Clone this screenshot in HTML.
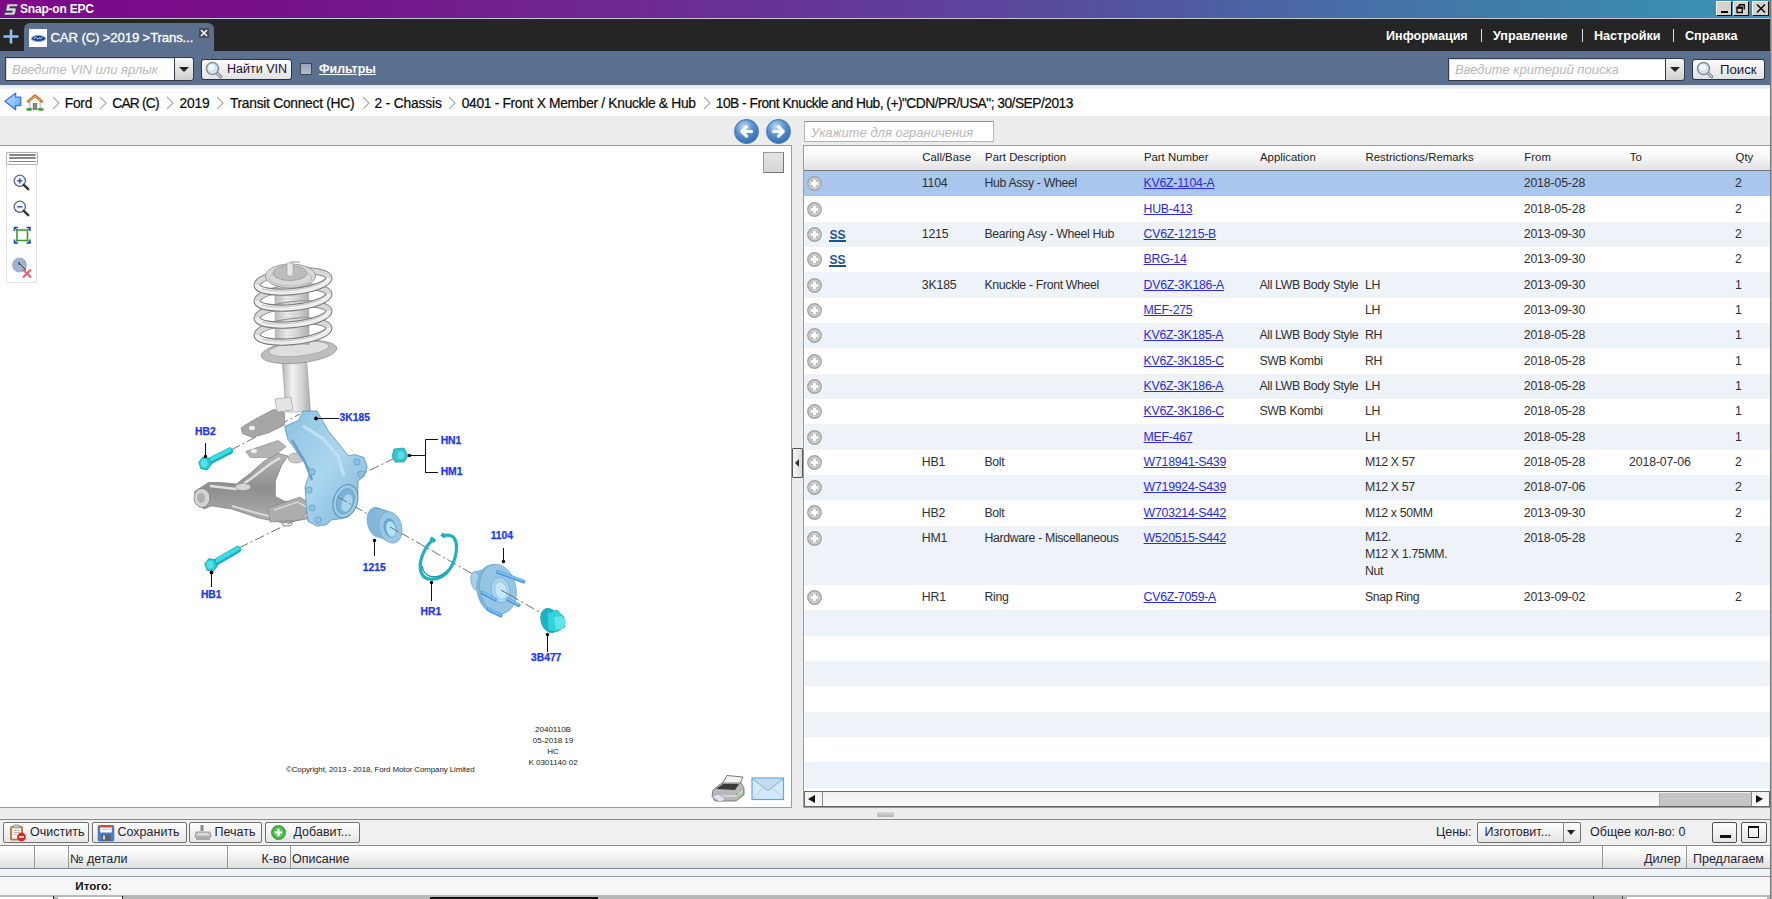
<!DOCTYPE html>
<html><head><meta charset="utf-8">
<style>
*{box-sizing:border-box;margin:0;padding:0}
html,body{width:1772px;height:899px;overflow:hidden;background:#ececec;font-family:"Liberation Sans",sans-serif;color:#222}
.a{position:absolute;white-space:nowrap}
#title{left:0;top:0;width:1772px;height:18px;background:linear-gradient(90deg,#7c0888 0%,#780e88 12%,#6e2890 35%,#623c98 50%,#5450a0 62%,#4c62a4 70%,#407ca8 84%,#3894b6 100%)}
#tline{left:0;top:18px;width:1772px;height:1px;background:#c8c8d0}
#dark{left:0;top:19px;width:1772px;height:33px;background:#252525}
#tab{left:24px;top:23px;width:190px;height:29px;background:#5b6f8f;border-radius:6px 6px 0 0}
#tool{left:0;top:51px;width:1772px;height:35px;background:#5b6f8f}
#bline{left:0;top:85px;width:1772px;height:4px;background:linear-gradient(#e2e5e8,#f4f5f6)}
#bread{left:0;top:89px;width:1772px;height:26.5px;background:#fff}
.inp{background:#fff;border:1.2px solid #343c4a;box-shadow:inset 1px 1px 0 #d8d8d8}
.ph{font:italic 13px "Liberation Sans",sans-serif;color:#b8b8b8}
.btn{background:linear-gradient(#fbfbfb,#e2e2e2);border:1.3px solid #2c323e;border-radius:3px}
.ddb{background:linear-gradient(#f6f6f6,#cfcfcf);border:1.2px solid #343c4a;border-radius:0 3px 3px 0}
.tri{width:0;height:0;border-left:5px solid transparent;border-right:5px solid transparent;border-top:5px solid #222}
.nav{font:bold 12.6px "Liberation Sans",sans-serif;color:#fff;top:28.5px}
.sep{top:29px;width:1px;height:13px;background:#ddd}
.bc{font:13.8px "Liberation Sans",sans-serif;color:#0a0a0a;top:96.3px;-webkit-text-stroke:0.2px #0a0a0a}
.chev{top:96px;width:8px;height:14px}
.panel{background:#fff;border:1px solid #a0a0a0}
.hdr{font:11.4px "Liberation Sans",sans-serif;color:#222;top:151px}
.row{left:804px;width:966px;height:25.33px}
.cell{font:12.3px "Liberation Sans",sans-serif;color:#303030}
.lnk{font:12.3px "Liberation Sans",sans-serif;color:#2a2ae0;text-decoration:underline}
.plus{width:15px;height:15px;border-radius:50%;background:radial-gradient(circle at 50% 40%,#f4f4f4 0,#dcdcdc 45%,#a8a8a8 75%,#c8c8c8 100%)}
.lbl{font:bold 10.3px "Liberation Sans",sans-serif;color:#2236f0;-webkit-text-stroke:0.25px #2236f0}
.bt{font:12.5px "Liberation Sans",sans-serif;color:#262230}
</style></head><body>
<!-- title bar -->
<div class="a" id="title"></div>
<div class="a" id="tline"></div>
<div class="a" style="left:3px;top:2px;width:16px;height:13px">
<svg width="16" height="13" viewBox="0 0 16 13"><path d="M4 1 L15 1 L14 3.5 L7 3.5 L6.5 5 L12 5 Q13.5 5 13 7 L12 10.5 Q11.5 12 10 12 L1 12 L2 9.5 L9 9.5 L9.5 8 L4 8 Q2.5 8 3 6.5 L4 2.5 Z" fill="#d8d8d8" stroke="#444" stroke-width="0.6"/></svg>
</div>
<div class="a" style="left:20px;top:2px;font:bold 12px 'Liberation Sans',sans-serif;color:#fff;letter-spacing:-0.2px">Snap-on EPC</div>
<div class="a" style="left:1716px;top:1px;width:16px;height:15px;background:#d6d3ce;border:1px solid;border-color:#fff #111 #111 #fff"><div class="a" style="left:4px;top:9px;width:7px;height:2px;background:#000"></div></div>
<div class="a" style="left:1733px;top:1px;width:16px;height:15px;background:#d6d3ce;border:1px solid;border-color:#fff #111 #111 #fff">
<svg class="a" style="left:2px;top:2px" width="10" height="10" viewBox="0 0 10 10"><path d="M3 0.75H8.25V5.5M3 0.75V2.5M1 3.25H6.25V8.5H1Z M1 4H6.25" fill="none" stroke="#000" stroke-width="1.3"/></svg></div>
<div class="a" style="left:1752px;top:1px;width:17px;height:15px;background:#d6d3ce;border:1px solid;border-color:#fff #111 #111 #fff">
<svg class="a" style="left:3px;top:2px" width="10" height="9" viewBox="0 0 10 9"><path d="M1 0.5L9 8.5M9 0.5L1 8.5" stroke="#000" stroke-width="1.4"/></svg></div>
<!-- dark bar -->
<div class="a" id="dark"></div>
<div class="a" id="tab"></div>
<svg class="a" style="left:3px;top:29px" width="16" height="15" viewBox="0 0 16 15"><path d="M8 0.5V14.5M0.5 7.5H15.5" stroke="#8ec2f2" stroke-width="2.6"/></svg>
<div class="a" style="left:29px;top:29px;width:18px;height:18px;background:#fff">
<div class="a" style="left:1.5px;top:5.5px;width:15px;height:7px;border-radius:50%;background:#1d3f86;border:1px solid #8aa4d0"></div><svg class="a" style="left:4px;top:7px" width="10" height="4" viewBox="0 0 10 4"><path d="M1 3C2 1 3 1 4 2.5S6 1 7 2.5 9 1 9 1" fill="none" stroke="#fff" stroke-width="0.9"/></svg>
</div>
<div class="a" style="left:50.5px;top:30px;font:13.2px 'Liberation Sans',sans-serif;color:#fff;letter-spacing:-0.15px;-webkit-text-stroke:0.3px #fff">CAR (C) &gt;2019 &gt;Trans...</div>
<div class="a" style="left:199px;top:28px;width:10px;height:10px;background:#474a50"></div><svg class="a" style="left:199px;top:28px" width="10" height="10" viewBox="0 0 10 10"><path d="M2 2L8 8M8 2L2 8" stroke="#f4f4f4" stroke-width="1.7"/></svg>
<div class="a nav" style="left:1386px">Информация</div>
<div class="a sep" style="left:1481px"></div>
<div class="a nav" style="left:1493px">Управление</div>
<div class="a sep" style="left:1582px"></div>
<div class="a nav" style="left:1594px">Настройки</div>
<div class="a sep" style="left:1673px"></div>
<div class="a nav" style="left:1685px">Справка</div>
<!-- toolbar -->
<div class="a" id="tool"></div>
<div class="a inp" style="left:5px;top:57px;width:170px;height:24px"></div>
<div class="a ph" style="left:12px;top:62px">Введите VIN или ярлык</div>
<div class="a ddb" style="left:174px;top:57px;width:20px;height:24px"><div class="a tri" style="left:4px;top:9px"></div></div>
<div class="a btn" style="left:201px;top:59px;width:91px;height:21px"></div>
<svg class="a" style="left:205px;top:61px" width="18" height="18" viewBox="0 0 18 18"><path d="M11.8 11.8L15.6 15.6" stroke="#7a7a7a" stroke-width="3.2" stroke-linecap="round"/><path d="M11.8 11.8L15.6 15.6" stroke="#e8e8e8" stroke-width="1.2" stroke-linecap="round"/><circle cx="7.5" cy="7.5" r="6" fill="#d4e6f8" stroke="#8a9098" stroke-width="1.6"/><circle cx="6.5" cy="6.3" r="3" fill="#f2f8ff"/></svg>
<div class="a" style="left:227px;top:62px;font:12.5px 'Liberation Sans',sans-serif;color:#1a1030">Найти VIN</div>
<div class="a" style="left:299.5px;top:63px;width:12.5px;height:12px;background:linear-gradient(#98a4b8,#b4bcc8);border:1.3px solid #3e4858"></div>
<div class="a" style="left:319px;top:62px;font:bold 12.4px 'Liberation Sans',sans-serif;color:#fff;text-decoration:underline">Фильтры</div>
<div class="a inp" style="left:1448px;top:58px;width:218px;height:23px"></div>
<div class="a ph" style="left:1455px;top:62px">Введите критерий поиска</div>
<div class="a ddb" style="left:1665px;top:58px;width:20px;height:23px"><div class="a tri" style="left:4px;top:8px"></div></div>
<div class="a btn" style="left:1692px;top:59px;width:73px;height:21px"></div>
<svg class="a" style="left:1696px;top:61px" width="18" height="18" viewBox="0 0 18 18"><path d="M11.8 11.8L15.6 15.6" stroke="#7a7a7a" stroke-width="3.2" stroke-linecap="round"/><path d="M11.8 11.8L15.6 15.6" stroke="#e8e8e8" stroke-width="1.2" stroke-linecap="round"/><circle cx="7.5" cy="7.5" r="6" fill="#d4e6f8" stroke="#8a9098" stroke-width="1.6"/><circle cx="6.5" cy="6.3" r="3" fill="#f2f8ff"/></svg>
<div class="a" style="left:1720px;top:61.5px;font:13.2px 'Liberation Sans',sans-serif;color:#1a1430">Поиск</div>
<!-- breadcrumb -->
<div class="a" id="bline"></div>
<div class="a" id="bread"></div>
<svg class="a" style="left:4px;top:92px" width="18" height="19" viewBox="0 0 18 19"><defs><linearGradient id="ba" x1="0" y1="0" x2="1" y2="1"><stop offset="0" stop-color="#c8ecfe"/><stop offset="1" stop-color="#58a4f2"/></linearGradient></defs><path d="M0.9 9.3L11.6 1.2V5.2H16.7V13.7H11.6V17.8Z" fill="url(#ba)" stroke="#3a70f4" stroke-width="1.3" stroke-linejoin="round"/></svg>
<svg class="a" style="left:26px;top:94px" width="18" height="17" viewBox="0 0 18 17"><path d="M3.8 7V15H14.2V7L9 2.5Z" fill="#fbfbfb" stroke="#9a8aa0" stroke-width="0.7"/><path d="M1.3 8.2L9 1.6L16.7 8.2" fill="none" stroke="#c47a34" stroke-width="2.8" stroke-linejoin="round"/><path d="M2.5 7.6L9 2.2L15.5 7.6" fill="none" stroke="#e8b070" stroke-width="0.8"/><rect x="7.2" y="9.5" width="3.6" height="6" fill="#8a8a8a" stroke="#555" stroke-width="0.6"/><ellipse cx="3.2" cy="15.3" rx="3" ry="1.6" fill="#3aa83a"/><ellipse cx="14.8" cy="15.3" rx="3" ry="1.6" fill="#3aa83a"/></svg>
<svg class="a chev" style="left:52.0px" width="8" height="14" viewBox="0 0 8 14"><path d="M1 1L7 7L1 13" fill="none" stroke="#b0b0b0" stroke-width="1.3"/></svg>
<svg class="a chev" style="left:99.2px" width="8" height="14" viewBox="0 0 8 14"><path d="M1 1L7 7L1 13" fill="none" stroke="#b0b0b0" stroke-width="1.3"/></svg>
<svg class="a chev" style="left:166.0px" width="8" height="14" viewBox="0 0 8 14"><path d="M1 1L7 7L1 13" fill="none" stroke="#b0b0b0" stroke-width="1.3"/></svg>
<svg class="a chev" style="left:216.0px" width="8" height="14" viewBox="0 0 8 14"><path d="M1 1L7 7L1 13" fill="none" stroke="#b0b0b0" stroke-width="1.3"/></svg>
<svg class="a chev" style="left:361.6px" width="8" height="14" viewBox="0 0 8 14"><path d="M1 1L7 7L1 13" fill="none" stroke="#b0b0b0" stroke-width="1.3"/></svg>
<svg class="a chev" style="left:447.8px" width="8" height="14" viewBox="0 0 8 14"><path d="M1 1L7 7L1 13" fill="none" stroke="#b0b0b0" stroke-width="1.3"/></svg>
<svg class="a chev" style="left:702.6px" width="8" height="14" viewBox="0 0 8 14"><path d="M1 1L7 7L1 13" fill="none" stroke="#b0b0b0" stroke-width="1.3"/></svg>
<div class="a bc" style="left:64.8px;letter-spacing:-0.27px">Ford</div>
<div class="a bc" style="left:112.3px;letter-spacing:-0.8px">CAR (C)</div>
<div class="a bc" style="left:179.4px;letter-spacing:-0.17px">2019</div>
<div class="a bc" style="left:229.9px;letter-spacing:-0.27px">Transit Connect (HC)</div>
<div class="a bc" style="left:374.5px;letter-spacing:-0.17px">2 - Chassis</div>
<div class="a bc" style="left:461.7px;letter-spacing:-0.31px">0401 - Front X Member / Knuckle &amp; Hub</div>
<div class="a bc" style="left:715.8px;letter-spacing:-0.52px">10B - Front Knuckle and Hub, (+)"CDN/PR/USA"; 30/SEP/2013</div>
<svg class="a" style="left:733.5px;top:118.5px" width="25" height="25" viewBox="0 0 25 25"><defs><radialGradient id="gL" cx="40%" cy="30%" r="75%"><stop offset="0" stop-color="#c4dcf2"/><stop offset="0.5" stop-color="#5a90cc"/><stop offset="1" stop-color="#2a64a8"/></radialGradient></defs><circle cx="12.5" cy="12.5" r="11.8" fill="url(#gL)" stroke="#4a82c0" stroke-width="1.2"/><path d="M17.5 12.5H8M12.5 7.8L7.8 12.5L12.5 17.2" fill="none" stroke="#fff" stroke-width="3.2" stroke-linecap="round" stroke-linejoin="round"/></svg>
<svg class="a" style="left:765.5px;top:118.5px" width="25" height="25" viewBox="0 0 25 25"><defs><radialGradient id="gR" cx="40%" cy="30%" r="75%"><stop offset="0" stop-color="#c4dcf2"/><stop offset="0.5" stop-color="#5a90cc"/><stop offset="1" stop-color="#2a64a8"/></radialGradient></defs><circle cx="12.5" cy="12.5" r="11.8" fill="url(#gR)" stroke="#4a82c0" stroke-width="1.2"/><path d="M7.5 12.5H17M12.5 7.8L17.2 12.5L12.5 17.2" fill="none" stroke="#fff" stroke-width="3.2" stroke-linecap="round" stroke-linejoin="round"/></svg>
<div class="a" style="left:804px;top:121px;width:190px;height:21px;background:#fff;border:1px solid #b4b4b4;border-top-color:#8c8c8c"></div>
<div class="a ph" style="left:811px;top:124.5px">Укажите для ограничения</div>
<div class="a" style="left:0;top:145px;width:792px;height:663px;background:#fff;border:1px solid #9c9c9c;border-left:none"></div>
<div class="a" style="left:803px;top:145px;width:968px;height:663px;background:#fff;border:1px solid #9c9c9c"></div>
<div class="a" style="left:792px;top:447.5px;width:10.5px;height:30.5px;background:linear-gradient(90deg,#f6f6f6,#dcdcdc);border:1.2px solid #555;border-radius:1px"></div>
<div class="a" style="left:795px;top:459px;width:0;height:0;border-top:4px solid transparent;border-bottom:4px solid transparent;border-right:4px solid #333"></div>
<div class="a" style="left:804px;top:146px;width:966px;height:25px;background:linear-gradient(#ffffff 0%,#f7f7f7 45%,#e2e2e2 100%);border-bottom:1px solid #7a7a7a"></div>
<div class="a hdr" style="left:922.3px">Call/Base</div>
<div class="a hdr" style="left:985.1px">Part Description</div>
<div class="a hdr" style="left:1143.9px">Part Number</div>
<div class="a hdr" style="left:1260px">Application</div>
<div class="a hdr" style="left:1365.5px">Restrictions/Remarks</div>
<div class="a hdr" style="left:1524.3px">From</div>
<div class="a hdr" style="left:1629.7px">To</div>
<div class="a hdr" style="left:1735.6px">Qty</div>
<div class="a" style="left:804px;top:171.00px;width:966px;height:25.33px;background:#a9c6ec"></div>
<svg class="a" style="left:807px;top:176.20px" width="15" height="15" viewBox="0 0 15 15"><circle cx="7.5" cy="7.5" r="6.7" fill="#bdbdbd" stroke="#a4a4a4" stroke-width="1.4"/><circle cx="7.5" cy="7.5" r="5.3" fill="none" stroke="#dadada" stroke-width="1"/><path d="M7.5 3.8V11.2M3.8 7.5H11.2" stroke="#fff" stroke-width="2.8"/></svg>
<div class="a cell" style="left:921.6999999999999px;top:176.30px;letter-spacing:-0.14px">1104</div>
<div class="a cell" style="left:984.5px;top:176.30px;letter-spacing:-0.34px">Hub Assy - Wheel</div>
<div class="a cell" style="left:1523.7px;top:176.30px;letter-spacing:-0.14px">2018-05-28</div>
<div class="a cell" style="left:1735.0px;top:176.30px;letter-spacing:-0.14px">2</div>
<div class="a lnk" style="left:1143.6000000000001px;top:176.30px;letter-spacing:-0.25px">KV6Z-1104-A</div>
<div class="a" style="left:804px;top:196.33px;width:966px;height:25.33px;background:#ffffff"></div>
<svg class="a" style="left:807px;top:201.53px" width="15" height="15" viewBox="0 0 15 15"><circle cx="7.5" cy="7.5" r="6.7" fill="#bdbdbd" stroke="#a4a4a4" stroke-width="1.4"/><circle cx="7.5" cy="7.5" r="5.3" fill="none" stroke="#dadada" stroke-width="1"/><path d="M7.5 3.8V11.2M3.8 7.5H11.2" stroke="#fff" stroke-width="2.8"/></svg>
<div class="a cell" style="left:1523.7px;top:201.63px;letter-spacing:-0.14px">2018-05-28</div>
<div class="a cell" style="left:1735.0px;top:201.63px;letter-spacing:-0.14px">2</div>
<div class="a lnk" style="left:1143.6000000000001px;top:201.63px;letter-spacing:-0.25px">HUB-413</div>
<div class="a" style="left:804px;top:221.66px;width:966px;height:25.33px;background:#eef3fa"></div>
<svg class="a" style="left:807px;top:226.86px" width="15" height="15" viewBox="0 0 15 15"><circle cx="7.5" cy="7.5" r="6.7" fill="#bdbdbd" stroke="#a4a4a4" stroke-width="1.4"/><circle cx="7.5" cy="7.5" r="5.3" fill="none" stroke="#dadada" stroke-width="1"/><path d="M7.5 3.8V11.2M3.8 7.5H11.2" stroke="#fff" stroke-width="2.8"/></svg>
<div class="a" style="left:829.5px;top:228.16px;font:bold 12px 'Liberation Sans',sans-serif;color:#1a5496">SS</div><div class="a" style="left:829.0px;top:240.16px;width:17px;height:1.8px;background:#1a5496"></div>
<div class="a cell" style="left:921.6999999999999px;top:226.96px;letter-spacing:-0.14px">1215</div>
<div class="a cell" style="left:984.5px;top:226.96px;letter-spacing:-0.34px">Bearing Asy - Wheel Hub</div>
<div class="a cell" style="left:1523.7px;top:226.96px;letter-spacing:-0.14px">2013-09-30</div>
<div class="a cell" style="left:1735.0px;top:226.96px;letter-spacing:-0.14px">2</div>
<div class="a lnk" style="left:1143.6000000000001px;top:226.96px;letter-spacing:-0.25px">CV6Z-1215-B</div>
<div class="a" style="left:804px;top:246.99px;width:966px;height:25.33px;background:#ffffff"></div>
<svg class="a" style="left:807px;top:252.19px" width="15" height="15" viewBox="0 0 15 15"><circle cx="7.5" cy="7.5" r="6.7" fill="#bdbdbd" stroke="#a4a4a4" stroke-width="1.4"/><circle cx="7.5" cy="7.5" r="5.3" fill="none" stroke="#dadada" stroke-width="1"/><path d="M7.5 3.8V11.2M3.8 7.5H11.2" stroke="#fff" stroke-width="2.8"/></svg>
<div class="a" style="left:829.5px;top:253.49px;font:bold 12px 'Liberation Sans',sans-serif;color:#1a5496">SS</div><div class="a" style="left:829.0px;top:265.49px;width:17px;height:1.8px;background:#1a5496"></div>
<div class="a cell" style="left:1523.7px;top:252.29px;letter-spacing:-0.14px">2013-09-30</div>
<div class="a cell" style="left:1735.0px;top:252.29px;letter-spacing:-0.14px">2</div>
<div class="a lnk" style="left:1143.6000000000001px;top:252.29px;letter-spacing:-0.25px">BRG-14</div>
<div class="a" style="left:804px;top:272.32px;width:966px;height:25.33px;background:#eef3fa"></div>
<svg class="a" style="left:807px;top:277.52px" width="15" height="15" viewBox="0 0 15 15"><circle cx="7.5" cy="7.5" r="6.7" fill="#bdbdbd" stroke="#a4a4a4" stroke-width="1.4"/><circle cx="7.5" cy="7.5" r="5.3" fill="none" stroke="#dadada" stroke-width="1"/><path d="M7.5 3.8V11.2M3.8 7.5H11.2" stroke="#fff" stroke-width="2.8"/></svg>
<div class="a cell" style="left:921.6999999999999px;top:277.62px;letter-spacing:-0.14px">3K185</div>
<div class="a cell" style="left:984.5px;top:277.62px;letter-spacing:-0.34px">Knuckle - Front Wheel</div>
<div class="a cell" style="left:1259.4px;top:277.62px;letter-spacing:-0.34px">All LWB Body Style</div>
<div class="a cell" style="left:1364.9px;top:277.62px;letter-spacing:-0.34px">LH</div>
<div class="a cell" style="left:1523.7px;top:277.62px;letter-spacing:-0.14px">2013-09-30</div>
<div class="a cell" style="left:1735.0px;top:277.62px;letter-spacing:-0.14px">1</div>
<div class="a lnk" style="left:1143.6000000000001px;top:277.62px;letter-spacing:-0.25px">DV6Z-3K186-A</div>
<div class="a" style="left:804px;top:297.65px;width:966px;height:25.33px;background:#ffffff"></div>
<svg class="a" style="left:807px;top:302.85px" width="15" height="15" viewBox="0 0 15 15"><circle cx="7.5" cy="7.5" r="6.7" fill="#bdbdbd" stroke="#a4a4a4" stroke-width="1.4"/><circle cx="7.5" cy="7.5" r="5.3" fill="none" stroke="#dadada" stroke-width="1"/><path d="M7.5 3.8V11.2M3.8 7.5H11.2" stroke="#fff" stroke-width="2.8"/></svg>
<div class="a cell" style="left:1364.9px;top:302.95px;letter-spacing:-0.34px">LH</div>
<div class="a cell" style="left:1523.7px;top:302.95px;letter-spacing:-0.14px">2013-09-30</div>
<div class="a cell" style="left:1735.0px;top:302.95px;letter-spacing:-0.14px">1</div>
<div class="a lnk" style="left:1143.6000000000001px;top:302.95px;letter-spacing:-0.25px">MEF-275</div>
<div class="a" style="left:804px;top:322.98px;width:966px;height:25.33px;background:#eef3fa"></div>
<svg class="a" style="left:807px;top:328.18px" width="15" height="15" viewBox="0 0 15 15"><circle cx="7.5" cy="7.5" r="6.7" fill="#bdbdbd" stroke="#a4a4a4" stroke-width="1.4"/><circle cx="7.5" cy="7.5" r="5.3" fill="none" stroke="#dadada" stroke-width="1"/><path d="M7.5 3.8V11.2M3.8 7.5H11.2" stroke="#fff" stroke-width="2.8"/></svg>
<div class="a cell" style="left:1259.4px;top:328.28px;letter-spacing:-0.34px">All LWB Body Style</div>
<div class="a cell" style="left:1364.9px;top:328.28px;letter-spacing:-0.34px">RH</div>
<div class="a cell" style="left:1523.7px;top:328.28px;letter-spacing:-0.14px">2018-05-28</div>
<div class="a cell" style="left:1735.0px;top:328.28px;letter-spacing:-0.14px">1</div>
<div class="a lnk" style="left:1143.6000000000001px;top:328.28px;letter-spacing:-0.25px">KV6Z-3K185-A</div>
<div class="a" style="left:804px;top:348.31px;width:966px;height:25.33px;background:#ffffff"></div>
<svg class="a" style="left:807px;top:353.51px" width="15" height="15" viewBox="0 0 15 15"><circle cx="7.5" cy="7.5" r="6.7" fill="#bdbdbd" stroke="#a4a4a4" stroke-width="1.4"/><circle cx="7.5" cy="7.5" r="5.3" fill="none" stroke="#dadada" stroke-width="1"/><path d="M7.5 3.8V11.2M3.8 7.5H11.2" stroke="#fff" stroke-width="2.8"/></svg>
<div class="a cell" style="left:1259.4px;top:353.61px;letter-spacing:-0.34px">SWB Kombi</div>
<div class="a cell" style="left:1364.9px;top:353.61px;letter-spacing:-0.34px">RH</div>
<div class="a cell" style="left:1523.7px;top:353.61px;letter-spacing:-0.14px">2018-05-28</div>
<div class="a cell" style="left:1735.0px;top:353.61px;letter-spacing:-0.14px">1</div>
<div class="a lnk" style="left:1143.6000000000001px;top:353.61px;letter-spacing:-0.25px">KV6Z-3K185-C</div>
<div class="a" style="left:804px;top:373.64px;width:966px;height:25.33px;background:#eef3fa"></div>
<svg class="a" style="left:807px;top:378.84px" width="15" height="15" viewBox="0 0 15 15"><circle cx="7.5" cy="7.5" r="6.7" fill="#bdbdbd" stroke="#a4a4a4" stroke-width="1.4"/><circle cx="7.5" cy="7.5" r="5.3" fill="none" stroke="#dadada" stroke-width="1"/><path d="M7.5 3.8V11.2M3.8 7.5H11.2" stroke="#fff" stroke-width="2.8"/></svg>
<div class="a cell" style="left:1259.4px;top:378.94px;letter-spacing:-0.34px">All LWB Body Style</div>
<div class="a cell" style="left:1364.9px;top:378.94px;letter-spacing:-0.34px">LH</div>
<div class="a cell" style="left:1523.7px;top:378.94px;letter-spacing:-0.14px">2018-05-28</div>
<div class="a cell" style="left:1735.0px;top:378.94px;letter-spacing:-0.14px">1</div>
<div class="a lnk" style="left:1143.6000000000001px;top:378.94px;letter-spacing:-0.25px">KV6Z-3K186-A</div>
<div class="a" style="left:804px;top:398.97px;width:966px;height:25.33px;background:#ffffff"></div>
<svg class="a" style="left:807px;top:404.17px" width="15" height="15" viewBox="0 0 15 15"><circle cx="7.5" cy="7.5" r="6.7" fill="#bdbdbd" stroke="#a4a4a4" stroke-width="1.4"/><circle cx="7.5" cy="7.5" r="5.3" fill="none" stroke="#dadada" stroke-width="1"/><path d="M7.5 3.8V11.2M3.8 7.5H11.2" stroke="#fff" stroke-width="2.8"/></svg>
<div class="a cell" style="left:1259.4px;top:404.27px;letter-spacing:-0.34px">SWB Kombi</div>
<div class="a cell" style="left:1364.9px;top:404.27px;letter-spacing:-0.34px">LH</div>
<div class="a cell" style="left:1523.7px;top:404.27px;letter-spacing:-0.14px">2018-05-28</div>
<div class="a cell" style="left:1735.0px;top:404.27px;letter-spacing:-0.14px">1</div>
<div class="a lnk" style="left:1143.6000000000001px;top:404.27px;letter-spacing:-0.25px">KV6Z-3K186-C</div>
<div class="a" style="left:804px;top:424.30px;width:966px;height:25.33px;background:#eef3fa"></div>
<svg class="a" style="left:807px;top:429.50px" width="15" height="15" viewBox="0 0 15 15"><circle cx="7.5" cy="7.5" r="6.7" fill="#bdbdbd" stroke="#a4a4a4" stroke-width="1.4"/><circle cx="7.5" cy="7.5" r="5.3" fill="none" stroke="#dadada" stroke-width="1"/><path d="M7.5 3.8V11.2M3.8 7.5H11.2" stroke="#fff" stroke-width="2.8"/></svg>
<div class="a cell" style="left:1364.9px;top:429.60px;letter-spacing:-0.34px">LH</div>
<div class="a cell" style="left:1523.7px;top:429.60px;letter-spacing:-0.14px">2018-05-28</div>
<div class="a cell" style="left:1735.0px;top:429.60px;letter-spacing:-0.14px">1</div>
<div class="a lnk" style="left:1143.6000000000001px;top:429.60px;letter-spacing:-0.25px">MEF-467</div>
<div class="a" style="left:804px;top:449.63px;width:966px;height:25.33px;background:#ffffff"></div>
<svg class="a" style="left:807px;top:454.83px" width="15" height="15" viewBox="0 0 15 15"><circle cx="7.5" cy="7.5" r="6.7" fill="#bdbdbd" stroke="#a4a4a4" stroke-width="1.4"/><circle cx="7.5" cy="7.5" r="5.3" fill="none" stroke="#dadada" stroke-width="1"/><path d="M7.5 3.8V11.2M3.8 7.5H11.2" stroke="#fff" stroke-width="2.8"/></svg>
<div class="a cell" style="left:921.6999999999999px;top:454.93px;letter-spacing:-0.14px">HB1</div>
<div class="a cell" style="left:984.5px;top:454.93px;letter-spacing:-0.34px">Bolt</div>
<div class="a cell" style="left:1364.9px;top:454.93px;letter-spacing:-0.34px">M12 X 57</div>
<div class="a cell" style="left:1523.7px;top:454.93px;letter-spacing:-0.14px">2018-05-28</div>
<div class="a cell" style="left:1629.1000000000001px;top:454.93px;letter-spacing:-0.14px">2018-07-06</div>
<div class="a cell" style="left:1735.0px;top:454.93px;letter-spacing:-0.14px">2</div>
<div class="a lnk" style="left:1143.6000000000001px;top:454.93px;letter-spacing:-0.25px">W718941-S439</div>
<div class="a" style="left:804px;top:474.96px;width:966px;height:25.33px;background:#eef3fa"></div>
<svg class="a" style="left:807px;top:480.16px" width="15" height="15" viewBox="0 0 15 15"><circle cx="7.5" cy="7.5" r="6.7" fill="#bdbdbd" stroke="#a4a4a4" stroke-width="1.4"/><circle cx="7.5" cy="7.5" r="5.3" fill="none" stroke="#dadada" stroke-width="1"/><path d="M7.5 3.8V11.2M3.8 7.5H11.2" stroke="#fff" stroke-width="2.8"/></svg>
<div class="a cell" style="left:1364.9px;top:480.26px;letter-spacing:-0.34px">M12 X 57</div>
<div class="a cell" style="left:1523.7px;top:480.26px;letter-spacing:-0.14px">2018-07-06</div>
<div class="a cell" style="left:1735.0px;top:480.26px;letter-spacing:-0.14px">2</div>
<div class="a lnk" style="left:1143.6000000000001px;top:480.26px;letter-spacing:-0.25px">W719924-S439</div>
<div class="a" style="left:804px;top:500.29px;width:966px;height:25.33px;background:#ffffff"></div>
<svg class="a" style="left:807px;top:505.49px" width="15" height="15" viewBox="0 0 15 15"><circle cx="7.5" cy="7.5" r="6.7" fill="#bdbdbd" stroke="#a4a4a4" stroke-width="1.4"/><circle cx="7.5" cy="7.5" r="5.3" fill="none" stroke="#dadada" stroke-width="1"/><path d="M7.5 3.8V11.2M3.8 7.5H11.2" stroke="#fff" stroke-width="2.8"/></svg>
<div class="a cell" style="left:921.6999999999999px;top:505.59px;letter-spacing:-0.14px">HB2</div>
<div class="a cell" style="left:984.5px;top:505.59px;letter-spacing:-0.34px">Bolt</div>
<div class="a cell" style="left:1364.9px;top:505.59px;letter-spacing:-0.34px">M12 x 50MM</div>
<div class="a cell" style="left:1523.7px;top:505.59px;letter-spacing:-0.14px">2013-09-30</div>
<div class="a cell" style="left:1735.0px;top:505.59px;letter-spacing:-0.14px">2</div>
<div class="a lnk" style="left:1143.6000000000001px;top:505.59px;letter-spacing:-0.25px">W703214-S442</div>
<div class="a" style="left:804px;top:525.62px;width:966px;height:59.50px;background:#eef3fa"></div>
<svg class="a" style="left:807px;top:530.82px" width="15" height="15" viewBox="0 0 15 15"><circle cx="7.5" cy="7.5" r="6.7" fill="#bdbdbd" stroke="#a4a4a4" stroke-width="1.4"/><circle cx="7.5" cy="7.5" r="5.3" fill="none" stroke="#dadada" stroke-width="1"/><path d="M7.5 3.8V11.2M3.8 7.5H11.2" stroke="#fff" stroke-width="2.8"/></svg>
<div class="a cell" style="left:921.6999999999999px;top:530.92px;letter-spacing:-0.14px">HM1</div>
<div class="a cell" style="left:984.5px;top:530.92px;letter-spacing:-0.34px">Hardware - Miscellaneous</div>
<div class="a cell" style="left:1364.9px;top:530.92px;line-height:17px;margin-top:-2px;letter-spacing:-0.34px">M12.<br>M12 X 1.75MM.<br>Nut</div>
<div class="a cell" style="left:1523.7px;top:530.92px;letter-spacing:-0.14px">2018-05-28</div>
<div class="a cell" style="left:1735.0px;top:530.92px;letter-spacing:-0.14px">2</div>
<div class="a lnk" style="left:1143.6000000000001px;top:530.92px;letter-spacing:-0.25px">W520515-S442</div>
<div class="a" style="left:804px;top:585.12px;width:966px;height:25.33px;background:#ffffff"></div>
<svg class="a" style="left:807px;top:590.32px" width="15" height="15" viewBox="0 0 15 15"><circle cx="7.5" cy="7.5" r="6.7" fill="#bdbdbd" stroke="#a4a4a4" stroke-width="1.4"/><circle cx="7.5" cy="7.5" r="5.3" fill="none" stroke="#dadada" stroke-width="1"/><path d="M7.5 3.8V11.2M3.8 7.5H11.2" stroke="#fff" stroke-width="2.8"/></svg>
<div class="a cell" style="left:921.6999999999999px;top:590.42px;letter-spacing:-0.14px">HR1</div>
<div class="a cell" style="left:984.5px;top:590.42px;letter-spacing:-0.34px">Ring</div>
<div class="a cell" style="left:1364.9px;top:590.42px;letter-spacing:-0.34px">Snap Ring</div>
<div class="a cell" style="left:1523.7px;top:590.42px;letter-spacing:-0.14px">2013-09-02</div>
<div class="a cell" style="left:1735.0px;top:590.42px;letter-spacing:-0.14px">2</div>
<div class="a lnk" style="left:1143.6000000000001px;top:590.42px;letter-spacing:-0.25px">CV6Z-7059-A</div>
<div class="a" style="left:804px;top:610.45px;width:966px;height:25.33px;background:#eef3fa"></div>
<div class="a" style="left:804px;top:635.78px;width:966px;height:25.33px;background:#ffffff"></div>
<div class="a" style="left:804px;top:661.11px;width:966px;height:25.33px;background:#eef3fa"></div>
<div class="a" style="left:804px;top:686.44px;width:966px;height:25.33px;background:#ffffff"></div>
<div class="a" style="left:804px;top:711.77px;width:966px;height:25.33px;background:#eef3fa"></div>
<div class="a" style="left:804px;top:737.10px;width:966px;height:25.33px;background:#ffffff"></div>
<div class="a" style="left:804px;top:762.43px;width:966px;height:25.33px;background:#eef3fa"></div>
<div class="a" style="left:804px;top:787.76px;width:966px;height:3.24px;background:#ffffff"></div>
<div class="a" style="left:803.5px;top:791.3px;width:966px;height:15.5px;background:linear-gradient(#f0f0f0,#fafafa);border:1.3px solid #666"></div>
<div class="a" style="left:822px;top:792px;width:1px;height:14px;background:#888"></div>
<div class="a" style="left:808px;top:795px;width:0;height:0;border-top:4.5px solid transparent;border-bottom:4.5px solid transparent;border-right:7px solid #111"></div>
<div class="a" style="left:1658.7px;top:792.5px;width:92.5px;height:13px;background:#c4c4c4;border-left:1px solid #aaa"></div>
<div class="a" style="left:1751px;top:792px;width:1px;height:14px;background:#888"></div>
<div class="a" style="left:1756px;top:795px;width:0;height:0;border-top:4.5px solid transparent;border-bottom:4.5px solid transparent;border-left:7px solid #111"></div>
<div class="a" style="left:1770px;top:0;width:2px;height:899px;background:linear-gradient(90deg,#7a7a7a 50%,#a8a8a8 50%)"></div>
<div class="a" style="left:6px;top:152px;width:32px;height:12.5px;background:#fff;border:1.2px solid #b4b4b4;border-radius:1px"></div>
<div class="a" style="left:8.8px;top:154.2px;width:27px;height:1.7px;background:#888;border-radius:1px"></div>
<div class="a" style="left:8.8px;top:157.4px;width:27px;height:1.7px;background:#888;border-radius:1px"></div>
<div class="a" style="left:8.8px;top:160.6px;width:27px;height:1.7px;background:#888;border-radius:1px"></div>
<div class="a" style="left:5.5px;top:164.5px;width:31.5px;height:118px;border:1px solid #e2e2e2;border-top:none"></div>
<svg class="a" style="left:13px;top:174px" width="20" height="20" viewBox="0 0 20 20"><circle cx="6.8" cy="6.8" r="5.6" fill="#f2f6fc" stroke="#5a6478" stroke-width="1.3"/><path d="M4.2 6.8H9.4" stroke="#2a4fc8" stroke-width="1.4"/><path d="M6.8 4.2V9.4" stroke="#2a4fc8" stroke-width="1.4"/><path d="M10.8 10.8L15.2 15.2" stroke="#333" stroke-width="2.4" stroke-linecap="round"/></svg>
<svg class="a" style="left:13px;top:200px" width="20" height="20" viewBox="0 0 20 20"><circle cx="6.8" cy="6.8" r="5.6" fill="#f2f6fc" stroke="#5a6478" stroke-width="1.3"/><path d="M4.2 6.8H9.4" stroke="#2a4fc8" stroke-width="1.4"/><path d="M10.8 10.8L15.2 15.2" stroke="#333" stroke-width="2.4" stroke-linecap="round"/></svg>
<svg class="a" style="left:12.5px;top:225.5px" width="20" height="20" viewBox="0 0 20 20"><rect x="4" y="4" width="10.5" height="10.5" fill="none" stroke="#3aa028" stroke-width="1.6"/><path d="M1.5 5V1.5H5M13.5 1.5H17V5M17 13.5V17H13.5M5 17H1.5V13.5" fill="none" stroke="#1a4f9a" stroke-width="1.6"/><path d="M1.5 1.5L4 4M17 1.5L14.5 4M17 17L14.5 14.5M1.5 17L4 14.5" stroke="#1a4f9a" stroke-width="1"/></svg>
<svg class="a" style="left:10px;top:254px" width="26" height="26" viewBox="0 0 26 26"><circle cx="9.5" cy="11" r="7.5" fill="#9fb4cc"/><path d="M9 9L16 16M9 8V11" stroke="#333" stroke-width="1"/><path d="M13 15.5L21 23.5M21 15.5L13 23.5" stroke="#e0607a" stroke-width="2.2"/></svg>
<div class="a" style="left:762.5px;top:152px;width:21px;height:21px;background:linear-gradient(#e4e4e4,#d6d6d6);border:1px solid #9a9a9a;border-right-color:#777;border-bottom-color:#777"></div>
<svg class="a" style="left:0;top:0" width="792" height="807" viewBox="0 0 792 807">
<defs>
<linearGradient id="gs" x1="0" y1="0" x2="1" y2="0"><stop offset="0" stop-color="#b4b4b4"/><stop offset="0.35" stop-color="#f2f2f2"/><stop offset="0.7" stop-color="#d4d4d4"/><stop offset="1" stop-color="#a8a8a8"/></linearGradient>
<linearGradient id="gk" x1="0" y1="0" x2="1" y2="1"><stop offset="0" stop-color="#8cc2e2"/><stop offset="0.5" stop-color="#acd6ee"/><stop offset="1" stop-color="#7ab4da"/></linearGradient>
<linearGradient id="ga" x1="0" y1="0" x2="0" y2="1"><stop offset="0" stop-color="#b6b6b6"/><stop offset="0.5" stop-color="#8e8e8e"/><stop offset="1" stop-color="#b0b0b0"/></linearGradient>
<linearGradient id="gc" x1="0" y1="0" x2="0" y2="1"><stop offset="0" stop-color="#6ee0e4"/><stop offset="1" stop-color="#20b4c4"/></linearGradient>
<linearGradient id="gb" x1="0" y1="0" x2="1" y2="1"><stop offset="0" stop-color="#b8dcf0"/><stop offset="1" stop-color="#6aa8d0"/></linearGradient>
</defs>
<path d="M231 450 L300 414" stroke="#707070" stroke-width="1" stroke-dasharray="10 3 2 3" fill="none"/>
<path d="M239 548 L312 512" stroke="#707070" stroke-width="1" stroke-dasharray="10 3 2 3" fill="none"/>
<path d="M395 458 L362 474" stroke="#707070" stroke-width="1" stroke-dasharray="10 3 2 3" fill="none"/>
<path d="M338 497 L548 617" stroke="#707070" stroke-width="1" stroke-dasharray="10 3 2 3" fill="none"/>
<path d="M194.3 491.9 L208.4 482.5 L220.8 482.5 L236.4 484.0 L250.4 473.2 L262.8 462.3 L276.9 453.0 L287.8 456.0 L281.5 465.4 L275.3 481.0 L275.3 496.5 L284.6 501.2 L306.4 502.8 L310.0 518.3 L284.6 523.0 L259.7 518.3 L231.7 509.0 L211.5 505.9 L203.7 509.0 Z" fill="url(#ga)" stroke="#7a7a7a" stroke-width="0.7"/>
<path d="M210 486 L236 489 L252 478 L270 464 L280 458" fill="none" stroke="#e0e0e0" stroke-width="2.5"/>
<path d="M232 506 L260 514 L285 519 L308 515" fill="none" stroke="#d8d8d8" stroke-width="2"/>
<ellipse cx="243" cy="487" rx="8" ry="3.5" fill="#d6d6d6" stroke="#888" stroke-width="0.6"/>
<ellipse cx="202" cy="498" rx="8" ry="9.5" fill="#d4d4d4" stroke="#7a7a7a" stroke-width="0.8"/>
<ellipse cx="201" cy="498" rx="4" ry="5" fill="#b0b0b0"/>
<path d="M268 508 L300 497 L314 506 L300 520 L270 522 Z" fill="#adadad" stroke="#808080" stroke-width="0.6"/><path d="M274 510 L298 502 L306 507" fill="none" stroke="#d8d8d8" stroke-width="1.5"/>
<ellipse cx="287" cy="523" rx="5" ry="3" fill="none" stroke="#999" stroke-width="1.2"/>
<path d="M241.0 428.0 L250.4 421.8 L273.7 409.3 L284.6 412.5 L284.6 425.0 L269.0 432.7 L252.0 437.4 L242.6 433.5 Z" fill="#a6a6a6" stroke="#7a7a7a" stroke-width="0.6"/>
<ellipse cx="252" cy="428" rx="3" ry="2.2" fill="#eee"/>
<path d="M245.7 451.4 L259.7 446.7 L278.4 440.5 L286.0 446.7 L272.2 457.6 L250.4 457.6 Z" fill="#b4b4b4" stroke="#808080" stroke-width="0.6"/>
<ellipse cx="254" cy="451" rx="3" ry="2" fill="#eee"/>
<ellipse cx="296" cy="458" rx="8" ry="5" fill="#c8c8c8" stroke="#888" stroke-width="0.6"/>
<path d="M282.3 362 L306.8 362 L310.5 412 L286 412 Z" fill="url(#gs)" stroke="#9a9a9a" stroke-width="0.6"/>
<path d="M275 399 L291 397 L293 410 L277 412 Z" fill="#e4e4e4" stroke="#999" stroke-width="0.6"/>
<ellipse cx="299" cy="352" rx="38" ry="11" transform="rotate(-6 299 352)" fill="#bdbdbd" stroke="#8a8a8a" stroke-width="0.7"/>
<ellipse cx="299" cy="349" rx="30" ry="7" transform="rotate(-6 299 349)" fill="#dedede" stroke="#999" stroke-width="0.6"/>
<path d="M274.5 292 L309 292 L309.5 345 L275 345 Z" fill="url(#gs)"/>
<path d="M275 296 H309" stroke="#b8b8b8" stroke-width="0.5"/>
<path d="M275 299 H309" stroke="#b8b8b8" stroke-width="0.5"/>
<path d="M275 302 H309" stroke="#b8b8b8" stroke-width="0.5"/>
<path d="M275 305 H309" stroke="#b8b8b8" stroke-width="0.5"/>
<path d="M275 308 H309" stroke="#b8b8b8" stroke-width="0.5"/>
<path d="M275 311 H309" stroke="#b8b8b8" stroke-width="0.5"/>
<path d="M275 314 H309" stroke="#b8b8b8" stroke-width="0.5"/>
<path d="M275 317 H309" stroke="#b8b8b8" stroke-width="0.5"/>
<path d="M275 320 H309" stroke="#b8b8b8" stroke-width="0.5"/>
<path d="M275 323 H309" stroke="#b8b8b8" stroke-width="0.5"/>
<path d="M275 326 H309" stroke="#b8b8b8" stroke-width="0.5"/>
<path d="M275 329 H309" stroke="#b8b8b8" stroke-width="0.5"/>
<path d="M275 332 H309" stroke="#b8b8b8" stroke-width="0.5"/>
<path d="M275 335 H309" stroke="#b8b8b8" stroke-width="0.5"/>
<path d="M275 338 H309" stroke="#b8b8b8" stroke-width="0.5"/>
<path d="M275 341 H309" stroke="#b8b8b8" stroke-width="0.5"/>
<path d="M275 344 H309" stroke="#b8b8b8" stroke-width="0.5"/>
<path d="M257 285 A36 10 -6 0 1 329 278" fill="none" stroke="#8c8c8c" stroke-width="7"/>
<path d="M257 285 A36 10 -6 0 1 329 278" fill="none" stroke="#d8d8d8" stroke-width="5"/>
<path d="M257 301 A36 10 -6 0 1 329 294" fill="none" stroke="#8c8c8c" stroke-width="7"/>
<path d="M257 301 A36 10 -6 0 1 329 294" fill="none" stroke="#d8d8d8" stroke-width="5"/>
<path d="M257 318 A36 10 -6 0 1 329 311" fill="none" stroke="#8c8c8c" stroke-width="7"/>
<path d="M257 318 A36 10 -6 0 1 329 311" fill="none" stroke="#d8d8d8" stroke-width="5"/>
<path d="M257 335 A36 10 -6 0 1 329 328" fill="none" stroke="#8c8c8c" stroke-width="7"/>
<path d="M257 335 A36 10 -6 0 1 329 328" fill="none" stroke="#d8d8d8" stroke-width="5"/>
<path d="M300 262 L290 262" stroke="#999"/>
<ellipse cx="290.5" cy="276" rx="25" ry="12" fill="#d8d8d8" stroke="#888" stroke-width="0.8"/><ellipse cx="290.5" cy="278" rx="21" ry="8" fill="none" stroke="#b0b0b0" stroke-width="0.8"/>
<ellipse cx="290" cy="273" rx="17" ry="7.5" fill="#bdbdbd" stroke="#8a8a8a" stroke-width="0.6"/>
<rect x="287" y="263" width="6" height="13" fill="#e8e8e8" stroke="#999" stroke-width="0.6"/>
<path d="M257 285 A36 10 -6 0 0 329 278" fill="none" stroke="#7a7a7a" stroke-width="7.2"/>
<path d="M257 285 A36 10 -6 0 0 329 278" fill="none" stroke="#eeeeee" stroke-width="5"/>
<path d="M262 289 A36 10 -6 0 0 324 281" fill="none" stroke="#c4c4c4" stroke-width="1"/>
<path d="M257 301 A36 10 -6 0 0 329 294" fill="none" stroke="#7a7a7a" stroke-width="7.2"/>
<path d="M257 301 A36 10 -6 0 0 329 294" fill="none" stroke="#eeeeee" stroke-width="5"/>
<path d="M262 305 A36 10 -6 0 0 324 297" fill="none" stroke="#c4c4c4" stroke-width="1"/>
<path d="M257 318 A36 10 -6 0 0 329 311" fill="none" stroke="#7a7a7a" stroke-width="7.2"/>
<path d="M257 318 A36 10 -6 0 0 329 311" fill="none" stroke="#eeeeee" stroke-width="5"/>
<path d="M262 322 A36 10 -6 0 0 324 314" fill="none" stroke="#c4c4c4" stroke-width="1"/>
<path d="M257 335 A36 10 -6 0 0 329 328" fill="none" stroke="#7a7a7a" stroke-width="7.2"/>
<path d="M257 335 A36 10 -6 0 0 329 328" fill="none" stroke="#eeeeee" stroke-width="5"/>
<path d="M262 339 A36 10 -6 0 0 324 331" fill="none" stroke="#c4c4c4" stroke-width="1"/>
<path d="M284.7 426.5 L298.7 420.2 L303.0 411.0 L317.0 411.0 L328.3 431.0 L342.3 448.3 L348.5 456.0 L354.8 454.5 L364.0 457.6 L367.2 467.0 L364.0 476.3 L357.9 481.0 L357.9 493.5 L353.2 512.0 L342.3 518.4 L331.4 520.0 L326.7 524.6 L317.4 526.2 L308.0 521.5 L306.5 509.0 L305.0 487.0 L311.0 470.0 L308.0 467.0 L298.7 454.5 L287.8 439.0 Z" fill="url(#gk)" stroke="#5a90b8" stroke-width="0.8"/>
<path d="M303 426 L322 438 L338 456 L344 476" fill="none" stroke="#c2e0f2" stroke-width="3"/>
<path d="M292 440 L305 462 L312 480" fill="none" stroke="#6aa0c8" stroke-width="2.5"/>
<circle cx="312" cy="472" r="3.2" fill="#8ec2e2" stroke="#5a90b8" stroke-width="0.6"/>
<circle cx="309" cy="490" r="3.2" fill="#8ec2e2" stroke="#5a90b8" stroke-width="0.6"/>
<circle cx="312" cy="508" r="3.2" fill="#8ec2e2" stroke="#5a90b8" stroke-width="0.6"/>
<circle cx="318" cy="520" r="3.2" fill="#8ec2e2" stroke="#5a90b8" stroke-width="0.6"/>
<circle cx="357" cy="462" r="3.2" fill="#8ec2e2" stroke="#5a90b8" stroke-width="0.6"/>
<circle cx="361" cy="474" r="3.2" fill="#8ec2e2" stroke="#5a90b8" stroke-width="0.6"/>
<ellipse cx="345.4" cy="501.2" rx="12" ry="17" transform="rotate(18 345.4 501.2)" fill="#9ccbe6" stroke="#5a90b8" stroke-width="1"/>
<ellipse cx="345.4" cy="501.2" rx="8.5" ry="13" transform="rotate(18 345.4 501.2)" fill="#7ab4d8" stroke="#5a90b8" stroke-width="0.6"/><ellipse cx="347" cy="503" rx="5" ry="9" transform="rotate(18 347 503)" fill="#a8d6ee"/>
<path d="M338 497 L352 505" stroke="#707070" stroke-width="1" stroke-dasharray="10 3 2 3" fill="none"/>
<path d="M205 463.5 L229.5 451" stroke="#18b0bc" stroke-width="7" stroke-linecap="round"/><path d="M205 462.5 L229.5 450" stroke="#3cdce4" stroke-width="4.2" stroke-linecap="round"/><path d="M211.3 464.7 L207.2 469.9 L200.9 468.7 L198.7 462.3 L202.8 457.1 L209.1 458.3 Z" fill="#24c8d4" stroke="#1690a0" stroke-width="0.7"/><ellipse cx="204.2" cy="463.2" rx="3.6" ry="4.2" fill="#50e0e8"/>
<path d="M211 565 L237.5 549.5" stroke="#18b0bc" stroke-width="7" stroke-linecap="round"/><path d="M211 564 L237.5 548.5" stroke="#3cdce4" stroke-width="4.2" stroke-linecap="round"/><path d="M217.3 566.2 L213.2 571.4 L206.9 570.2 L204.7 563.8 L208.8 558.6 L215.1 559.8 Z" fill="#24c8d4" stroke="#1690a0" stroke-width="0.7"/><ellipse cx="210.2" cy="564.7" rx="3.6" ry="4.2" fill="#50e0e8"/>
<path d="M394 449 L404 448 L408 456 L404 462 L395 462 L392 456 Z" fill="#30c4cc" stroke="#1894a4" stroke-width="0.7"/>
<ellipse cx="401" cy="455" rx="3.5" ry="4" fill="#62dae0"/>
<ellipse cx="377.5" cy="522.5" rx="10.5" ry="15.8" transform="rotate(-14 377.5 522.5)" fill="#80b6da"/>
<path d="M374 507.2 L388 511.6 L394.5 543 L380.5 538.5 Z" fill="#86bade"/>
<path d="M374.5 507.5 L389 511.5" stroke="#6aa2c8" stroke-width="1.2"/>
<ellipse cx="390.5" cy="527.4" rx="11.2" ry="16" transform="rotate(-14 390.5 527.4)" fill="#98c8e6" stroke="#78acd0" stroke-width="0.8"/>
<ellipse cx="390" cy="528" rx="6.3" ry="9.8" transform="rotate(-14 390 528)" fill="#6ea6cc"/>
<ellipse cx="391" cy="529" rx="4.6" ry="7.8" transform="rotate(-14 391 529)" fill="#b4e2f6"/>
<path d="M390 527 L402 534" stroke="#707070" stroke-width="1" stroke-dasharray="10 3 2 3" fill="none"/>
<path d="M433.4 539.5 C424 547 418 562 421 572 C424 582 440 582 449 570 C456 561 459 545 454 538 C451 534 446 535 443.4 535.6" fill="none" stroke="#22b0bc" stroke-width="3.2"/>
<path d="M422 566 C424 578 436 580 446 572" fill="none" stroke="#1a9aa8" stroke-width="1.5"/>
<path d="M430.5 538 L435 541.5 M441.5 534 L445.5 537" stroke="#22b0bc" stroke-width="4"/>
<path d="M474 571.5 L489 568 L491 592 L476 590.5 Z" fill="#88bcde"/>
<ellipse cx="475.5" cy="581" rx="4.5" ry="9.5" transform="rotate(-10 475.5 581)" fill="#a4d0ea" stroke="#6ea6cc" stroke-width="0.7"/>
<ellipse cx="495.5" cy="589.5" rx="19" ry="25.5" transform="rotate(-12 495.5 589.5)" fill="#7eb4d8"/>
<ellipse cx="498" cy="589" rx="18" ry="25" transform="rotate(-12 498 589)" fill="#96c6e4" stroke="#6ea6cc" stroke-width="0.7"/>
<ellipse cx="500.5" cy="590" rx="9.5" ry="13" transform="rotate(-12 500.5 590)" fill="#a8d4ee" stroke="#78aed4" stroke-width="0.8"/>
<ellipse cx="501" cy="590.5" rx="6" ry="9" transform="rotate(-12 501 590.5)" fill="#c4e8f8" stroke="#88bce0" stroke-width="0.6"/>
<path d="M497.8 572 L523.4 581.5" stroke="#4a96de" stroke-width="3.8" stroke-linecap="round"/><path d="M497.8 571.5 L523.4 581.0" stroke="#7cc0f4" stroke-width="1.8" stroke-linecap="round"/>
<path d="M482.7 592.8 L495 599.4" stroke="#4a96de" stroke-width="3.8" stroke-linecap="round"/><path d="M482.7 592.3 L495 598.9" stroke="#7cc0f4" stroke-width="1.8" stroke-linecap="round"/>
<path d="M508.2 599.4 L518.6 605.1" stroke="#4a96de" stroke-width="3.8" stroke-linecap="round"/><path d="M508.2 598.9 L518.6 604.6" stroke="#7cc0f4" stroke-width="1.8" stroke-linecap="round"/>
<path d="M488.4 609.4 L500.7 615.5" stroke="#4a96de" stroke-width="3.8" stroke-linecap="round"/><path d="M488.4 608.9 L500.7 615.0" stroke="#7cc0f4" stroke-width="1.8" stroke-linecap="round"/>
<path d="M501 590 L517 599" stroke="#707070" stroke-width="1"/>
<ellipse cx="549.8" cy="620.5" rx="8.8" ry="12.5" transform="rotate(-18 549.8 620.5)" fill="#18b4c4" stroke="#12a0b0" stroke-width="0.6"/>
<path d="M547 613 L557 610 L564 617 L565 627 L557 632 L548 630 Z" fill="#34d2dc" stroke="#1aa8b8" stroke-width="0.6"/>
<path d="M554 617 L562 616 L566 622 L563 629 L556 629 Z" fill="#5ee6ec"/>
<path d="M205.5 443 V457" stroke="#111" stroke-width="1" fill="none"/><circle cx="205.5" cy="456.5" r="1.7" fill="#000"/>
<path d="M316 418.5 H339" stroke="#111" stroke-width="1" fill="none"/><circle cx="316" cy="418.5" r="1.9" fill="#000"/>
<path d="M409.5 455.5 H425.5 M425.5 439.5 V473 M425.5 439.5 H438 M425.5 472.5 H438" stroke="#111" stroke-width="1" fill="none"/><circle cx="409.5" cy="455.5" r="1.7" fill="#000"/>
<path d="M374.5 540 V556" stroke="#111" stroke-width="1" fill="none"/><circle cx="374.5" cy="540.5" r="1.7" fill="#000"/>
<path d="M431.5 582 V601" stroke="#111" stroke-width="1" fill="none"/><circle cx="431.5" cy="582.5" r="1.7" fill="#000"/>
<path d="M503.5 548 V562" stroke="#111" stroke-width="1" fill="none"/><circle cx="503.5" cy="561.5" r="1.7" fill="#000"/>
<path d="M547.5 634 V652" stroke="#111" stroke-width="1" fill="none"/><circle cx="547.5" cy="634.5" r="1.7" fill="#000"/>
<path d="M211.5 572 V587" stroke="#111" stroke-width="1" fill="none"/><circle cx="211.5" cy="572.5" r="1.9" fill="#000"/>
</svg>
<div class="a lbl" style="left:195.1px;top:425.5px">HB2</div>
<div class="a lbl" style="left:339.6px;top:412.3px">3K185</div>
<div class="a lbl" style="left:440.7px;top:434.5px">HN1</div>
<div class="a lbl" style="left:440.7px;top:465.6px">HM1</div>
<div class="a lbl" style="left:362.8px;top:561.6px">1215</div>
<div class="a lbl" style="left:420.6px;top:606.0px">HR1</div>
<div class="a lbl" style="left:490.7px;top:529.6px">1104</div>
<div class="a lbl" style="left:531px;top:652.0px">3B477</div>
<div class="a lbl" style="left:200.9px;top:588.5px">HB1</div>
<div class="a" style="left:286px;top:764.5px;font:7.9px 'Liberation Sans',sans-serif;color:#222;letter-spacing:-0.08px">©Copyright, 2013 - 2018, Ford Motor Company Limited</div>
<div class="a" style="left:473px;width:160px;text-align:center;top:725px;font:8px 'Liberation Sans',sans-serif;color:#222">2040110B</div>
<div class="a" style="left:473px;width:160px;text-align:center;top:736.3px;font:8px 'Liberation Sans',sans-serif;color:#222">05-2018 19</div>
<div class="a" style="left:473px;width:160px;text-align:center;top:747px;font:8px 'Liberation Sans',sans-serif;color:#222">HC</div>
<div class="a" style="left:473px;width:160px;text-align:center;top:758px;font:8px 'Liberation Sans',sans-serif;color:#222">K 0301140 02</div>
<svg class="a" style="left:710px;top:774px" width="36" height="30" viewBox="0 0 36 30"><path d="M12 10L17 1.5L33 3L29 12Z" fill="#f4f4f4" stroke="#777" stroke-width="1"/><path d="M3 16L12 9H31L34 14V21L26 27H5L2 22Z" fill="#b8b8b8" stroke="#666" stroke-width="0.8"/><path d="M6 15L13 10H29L25 16Z" fill="#3a3a3a"/><path d="M4 22L26 22L33 17" stroke="#eee" stroke-width="1" fill="none"/><path d="M2 23L10 28L16 25L8 20Z" fill="#dde6ee" stroke="#999" stroke-width="0.6"/><circle cx="27" cy="20" r="1" fill="#3c3"/></svg>
<svg class="a" style="left:751px;top:777px" width="34" height="24" viewBox="0 0 34 24"><rect x="1" y="1" width="31.5" height="21.5" fill="#d4e8f8" stroke="#6aa2dc" stroke-width="1.2"/><path d="M1.5 2L17 13.5L32 2" fill="#c2dcf4" stroke="#7aaee0" stroke-width="1"/><path d="M1.5 22L12 11M32 22L22 11" stroke="#a8c8ea" stroke-width="0.8"/></svg>
<div class="a" style="left:0;top:807.5px;width:1770px;height:11.5px;background:#ededed"></div>
<div class="a" style="left:877px;top:811.5px;width:16.5px;height:5px;background:linear-gradient(#d8d8d8,#b4b4b4)"></div>
<div class="a" style="left:0;top:818.5px;width:1770px;height:1.5px;background:#8a8a8a"></div>
<div class="a" style="left:0;top:820px;width:1770px;height:25px;background:#f0f0f0"></div>
<div class="a" style="left:3.4px;top:821.5px;width:86.0px;height:21.5px;background:linear-gradient(#fdfdfd,#e6e6e6);border:1px solid #707070;border-radius:2px"></div><svg class="a" style="left:8.5px;top:823.5px" width="18" height="18" viewBox="0 0 18 18"><rect x="1.5" y="2.5" width="12" height="13.5" rx="1" fill="#c8923a" stroke="#9a6a28" stroke-width="0.8"/><rect x="3.2" y="4" width="8.6" height="10.5" fill="#fafafa"/><rect x="4.5" y="1" width="6" height="3" rx="1" fill="#c8c8c8" stroke="#777" stroke-width="0.7"/><path d="M4.5 6.5H10.5M4.5 8.5H10.5M4.5 10.5H8" stroke="#9a9a9a" stroke-width="0.7"/><circle cx="12.5" cy="13" r="4.4" fill="#e42424"/><path d="M10 13H15" stroke="#fff" stroke-width="1.7"/></svg><div class="a bt" style="left:30px;top:824.5px">Очистить</div>
<div class="a" style="left:92.3px;top:821.5px;width:94.3px;height:21.5px;background:linear-gradient(#fdfdfd,#e6e6e6);border:1px solid #707070;border-radius:2px"></div><svg class="a" style="left:97px;top:823.5px" width="18" height="18" viewBox="0 0 18 18"><rect x="1.2" y="1.5" width="15.6" height="15.5" rx="1" fill="#4a7cd0" stroke="#3a62a8" stroke-width="0.8"/><rect x="3.2" y="2" width="11.6" height="6.5" fill="#fbfbfb"/><path d="M3.2 2.8H14.8" stroke="#e43030" stroke-width="1.4"/><path d="M4.5 5.5H13.5" stroke="#bbb" stroke-width="0.6"/><rect x="4.5" y="10.5" width="9" height="6" fill="#606060"/><rect x="6" y="11.5" width="2" height="4" fill="#d8d8d8"/></svg><div class="a bt" style="left:117.5px;top:824.5px">Сохранить</div>
<div class="a" style="left:189.3px;top:821.5px;width:73.09999999999997px;height:21.5px;background:linear-gradient(#fdfdfd,#e6e6e6);border:1px solid #707070;border-radius:2px"></div><svg class="a" style="left:194px;top:823px" width="18" height="18" viewBox="0 0 18 18"><rect x="6.5" y="2" width="3" height="6" fill="#888"/><path d="M2 9H16L17 14H1Z" fill="#c8c8c8" stroke="#8a8a8a" stroke-width="0.8"/><rect x="2" y="14" width="14" height="3" fill="#aaa"/><path d="M4 11H14" stroke="#eee" stroke-width="1"/></svg><div class="a bt" style="left:214.5px;top:824.5px">Печать</div>
<div class="a" style="left:265.1px;top:821.5px;width:94.59999999999997px;height:21.5px;background:linear-gradient(#fdfdfd,#e6e6e6);border:1px solid #707070;border-radius:2px"></div><svg class="a" style="left:270px;top:823.5px" width="17" height="17" viewBox="0 0 17 17"><circle cx="8.5" cy="8.5" r="7" fill="#48b048" stroke="#2a8a2a" stroke-width="0.8"/><circle cx="8.5" cy="8.5" r="5" fill="#5cc85c"/><path d="M8.5 4.8V12.2M4.8 8.5H12.2" stroke="#fff" stroke-width="2.2"/></svg><div class="a bt" style="left:293.5px;top:824.5px">Добавит...</div>
<div class="a bt" style="left:1436px;top:824.5px">Цены:</div>
<div class="a" style="left:1476.6px;top:821.5px;width:104.5px;height:21.5px;background:linear-gradient(#fdfdfd,#e4e4e4);border:1px solid #707070;border-radius:2px"></div>
<div class="a" style="left:1562.5px;top:822px;width:1px;height:20.5px;background:#888"></div>
<div class="a tri" style="left:1567px;top:830px;border-left-width:4.5px;border-right-width:4.5px;border-top-width:5px"></div>
<div class="a bt" style="left:1484.5px;top:824.5px">Изготовит...</div>
<div class="a bt" style="left:1590px;top:824.5px">Общее кол-во: 0</div>
<div class="a" style="left:1712.4px;top:821.5px;width:25px;height:21.5px;background:linear-gradient(#fdfdfd,#e4e4e4);border:1px solid #505050;border-radius:2px"></div>
<div class="a" style="left:1719.5px;top:835px;width:11px;height:2.5px;background:#111"></div>
<div class="a" style="left:1740.5px;top:821.5px;width:26px;height:21.5px;background:linear-gradient(#fdfdfd,#e4e4e4);border:1px solid #505050;border-radius:2px"></div>
<div class="a" style="left:1747.5px;top:826px;width:11.5px;height:11.5px;border:1.5px solid #111;border-top-width:2.5px"></div>
<div class="a" style="left:0;top:844.5px;width:1770px;height:24px;background:linear-gradient(#ffffff 0%,#f6f6f6 40%,#dedede 100%);border-top:1.2px solid #8a8a8a;border-bottom:1.3px solid #8a8a8a"></div>
<div class="a" style="left:34.4px;top:846px;width:1px;height:22px;background:#9a9a9a"></div>
<div class="a" style="left:68.2px;top:846px;width:1px;height:22px;background:#9a9a9a"></div>
<div class="a" style="left:226.5px;top:846px;width:1px;height:22px;background:#9a9a9a"></div>
<div class="a" style="left:289.5px;top:846px;width:1px;height:22px;background:#9a9a9a"></div>
<div class="a" style="left:1601.5px;top:846px;width:1px;height:22px;background:#9a9a9a"></div>
<div class="a" style="left:1686px;top:846px;width:1px;height:22px;background:#9a9a9a"></div>
<div class="a bt" style="left:70px;top:852px">№ детали</div>
<div class="a bt" style="left:261.5px;top:852px">К-во</div>
<div class="a bt" style="left:292px;top:852px">Описание</div>
<div class="a bt" style="left:1644px;top:852px">Дилер</div>
<div class="a bt" style="left:1693px;top:852px">Предлагаем</div>
<div class="a" style="left:0;top:868.5px;width:1770px;height:7px;background:#eef3fa"></div>
<div class="a" style="left:0;top:875.5px;width:1770px;height:1.5px;background:#9a9a9a"></div>
<div class="a" style="left:0;top:877px;width:1770px;height:18px;background:#f6f6f6"></div>
<div class="a" style="left:75.3px;top:879px;font:bold 11.6px 'Liberation Sans',sans-serif;color:#111">Итого:</div>
<div class="a" style="left:0;top:895px;width:1772px;height:4px;background:#b8b8b8"></div>
<div class="a" style="left:0;top:896.5px;width:53px;height:2.5px;background:#fff"></div>
<div class="a" style="left:58px;top:896.5px;width:65px;height:2.5px;background:#fff"></div>
<div class="a" style="left:430px;top:896.5px;width:168px;height:2.5px;background:#111"></div>
<div class="a" style="left:1627px;top:897px;width:140px;height:2px;background:#fff"></div>
<div class="a" style="left:53px;top:896px;width:1px;height:3px;background:#222"></div>
<div class="a" style="left:122px;top:896px;width:1px;height:3px;background:#222"></div>
<div class="a" style="left:1593px;top:896px;width:1px;height:3px;background:#555"></div>
<div class="a" style="left:1622px;top:896px;width:1px;height:3px;background:#555"></div>
<div class="a" style="left:1770px;top:0;width:2px;height:899px;background:linear-gradient(90deg,#7a7a7a 50%,#a8a8a8 50%)"></div>
</body></html>
